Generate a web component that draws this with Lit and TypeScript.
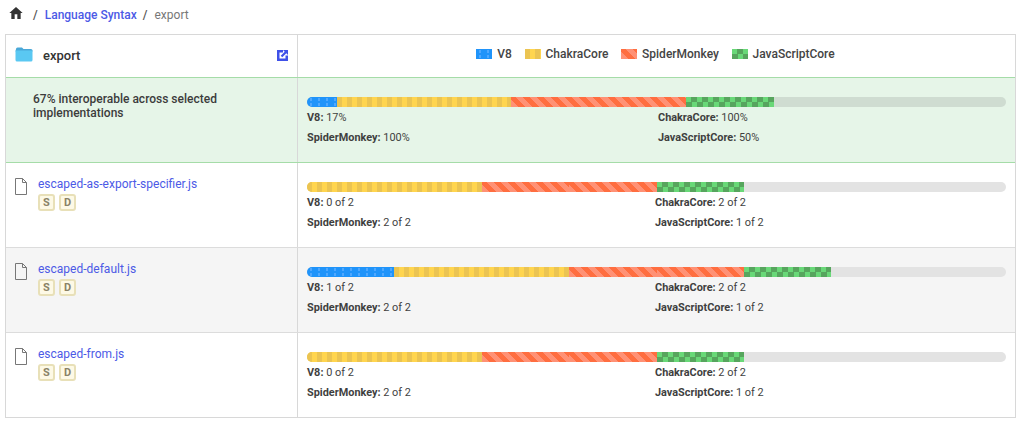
import { LitElement, html, css, svg } from 'lit';
import { customElement } from 'lit/decorators.js';

type Impl = 'v8' | 'chakra' | 'spider' | 'jsc';

interface TestRow {
  name: string;
  segments: [Impl, number][];
  stats: [string, string, string, string];
}

const UNIT = 87.375;

const tests: TestRow[] = [
  {
    name: 'escaped-as-export-specifier.js',
    segments: [['chakra', 2], ['spider', 1], ['spider', 1], ['jsc', 1]],
    stats: ['0 of 2', '2 of 2', '2 of 2', '1 of 2'],
  },
  {
    name: 'escaped-default.js',
    segments: [['v8', 1], ['chakra', 2], ['spider', 1], ['spider', 1], ['jsc', 1]],
    stats: ['1 of 2', '2 of 2', '2 of 2', '1 of 2'],
  },
  {
    name: 'escaped-from.js',
    segments: [['chakra', 2], ['spider', 1], ['spider', 1], ['jsc', 1]],
    stats: ['0 of 2', '2 of 2', '2 of 2', '1 of 2'],
  },
];

const fileIcon = svg`<svg class="file" width="12" height="17" viewBox="0 0 12 17"><path d="M.5.5h7l4 4v12H.5z M7.5.5v4h4" fill="none" stroke="#777" stroke-width="1"/></svg>`;

@customElement('app-root')
export class AppRoot extends LitElement {
  static styles = css`
    :host {
      display: block;
      font-family: Roboto, sans-serif;
      font-size: 12px;
      color: #444;
    }
    a {
      color: #4c5ae6;
      text-decoration: none;
    }
    .crumbs {
      display: flex;
      align-items: center;
      height: 30px;
      padding-left: 8px;
      font-weight: 500;
    }
    .crumbs .home {
      margin: -4px 9px 0 0;
    }
    .crumbs .sep {
      margin-right: 7px;
      color: #555;
    }
    .crumbs a {
      margin-right: 6px;
    }
    .crumbs .current {
      font-weight: 400;
      color: #777;
    }
    .table {
      margin: 4px 6px 0 5px;
      border: 1px solid #d8d8d8;
    }
    .row {
      display: grid;
      grid-template-columns: 292px 1fr;
      height: 84px;
      border-top: 1px solid #dcdcdc;
    }
    .row > div:first-child {
      border-right: 1px solid #d8d8d8;
    }
    .row.alt {
      background: #f5f5f5;
    }
    .row.head {
      height: 42px;
      border-top: 0;
    }
    .row.summary {
      background: #e6f5e8;
      border-top: 1px solid #a5dca8;
    }
    .row.summary + .row {
      border-top: 1px solid #a5dca8;
    }
    .title {
      display: flex;
      align-items: center;
      padding: 0 9px 1px 9px;
      font-size: 13px;
      font-weight: 500;
      color: #333;
    }
    .title .folder {
      margin: 0 10px 2px 0;
    }
    .title .name {
      flex: 1;
    }
    .legend {
      display: flex;
      justify-content: center;
      align-items: center;
      gap: 12.6px;
      padding: 0 2px 4px 0;
      font-weight: 500;
    }
    .legend span {
      display: flex;
      align-items: center;
      gap: 5px;
    }
    .swatch {
      width: 16px;
      height: 10px;
    }
    .rate {
      padding: 14px 27px;
      font-weight: 500;
      line-height: 14px;
      color: #3c3c3c;
    }
    .test {
      display: flex;
      gap: 11px;
      padding: 14px 9px;
    }
    .file {
      margin-top: 1px;
      flex: none;
    }
    .test a {
      display: block;
      line-height: 14px;
    }
    .flags {
      display: flex;
      gap: 4px;
      margin-top: 3px;
    }
    .flag {
      box-sizing: border-box;
      width: 17px;
      height: 17px;
      border: 2px solid #e8e0b8;
      border-radius: 3px;
      background: #fdf9e6;
      color: #8a8266;
      font-size: 11px;
      font-weight: 700;
      line-height: 13px;
      text-align: center;
    }
    .result {
      padding: 19px 9px 0 9px;
    }
    .track {
      display: flex;
      height: 10px;
      border-radius: 5px;
      overflow: hidden;
      background: #e3e3e3;
    }
    .summary .track {
      background: #cfdcd1;
    }
    .seg {
      flex: none;
      height: 100%;
    }
    .v8 {
      background-color: #2094fa;
      background-image: radial-gradient(circle at center, #4fa8ff 1.2px, transparent 1.4px);
      background-size: 8px 5px;
    }
    .chakra {
      background-color: #ffd54f;
      background-image: linear-gradient(90deg, #ebc452 50%, transparent 50%);
      background-size: 10px 10px;
    }
    .spider {
      background-color: #ff6e40;
      background-image: repeating-linear-gradient(45deg, #ff9175 0 5px, transparent 5px 10px);
    }
    .jsc {
      background-color: #69d878;
      background-image: conic-gradient(#57a55e 25%, transparent 25% 50%, #57a55e 50% 75%, transparent 75%);
      background-size: 11px 10px;
    }
    .stats {
      display: grid;
      grid-template-columns: 348px 1fr;
      margin-top: 1px;
      font-size: 10.9px;
      line-height: 20px;
      color: #3f3f3f;
    }
    .summary .stats {
      grid-template-columns: 351px 1fr;
    }
    .stats b {
      font-weight: 700;
    }
  `;

  private renderStats(v: string[]) {
    const names = ['V8', 'ChakraCore', 'SpiderMonkey', 'JavaScriptCore'];
    return html`<div class="stats">
      ${names.map((n, i) => html`<div><b>${n}:</b> ${v[i]}</div>`)}
    </div>`;
  }

  private renderBar(segments: [Impl, number][]) {
    return html`<div class="track">
      ${segments.map(
        ([impl, units]) => html`<div class="seg ${impl}" style="width:${units * UNIT}px"></div>`
      )}
    </div>`;
  }

  render() {
    return html`
      <nav class="crumbs">
        <svg class="home" width="16" height="16" viewBox="0 0 24 24"><path d="M10 21v-7h4v7h5v-9h3L12 3 2 12h3v9z" fill="#333"/></svg>
        <span class="sep">/</span>
        <a href="#">Language Syntax</a>
        <span class="sep">/</span>
        <span class="current">export</span>
      </nav>
      <div class="table">
        <div class="row head">
          <div class="title">
            <svg class="folder" width="18" height="15" viewBox="0 0 18 15"><path d="M1 2Q1 .5 2.500 .5H7l1.500 1.500H16q1.500 0 1.500 1.500v1H.5z" fill="#4aa8d8"/><path d="M.5 3.500h17v9.500q0 1.500-1.500 1.500H2Q.5 14.500.5 13z" fill="#5ac8f2"/></svg>
            <span class="name">export</span>
            <svg width="11" height="11" viewBox="0 0 11 11"><path d="M0 0h6v2.500H2.500v6h6V5.500H11V11H0z" fill="#3f51e8"/><path d="M6 0h5v5L9.300 3.300 5.300 7.300 3.700 5.700 7.700 1.700z" fill="#3f51e8"/></svg>
          </div>
          <div class="legend">
            <span><i class="swatch v8"></i>V8</span>
            <span><i class="swatch chakra"></i>ChakraCore</span>
            <span><i class="swatch spider"></i>SpiderMonkey</span>
            <span><i class="swatch jsc"></i>JavaScriptCore</span>
          </div>
        </div>
        <div class="row summary">
          <div class="rate">67% interoperable across selected<br />implementations</div>
          <div class="result">
            ${this.renderBar([['v8', 0.34], ['chakra', 2], ['spider', 2], ['jsc', 1]])}
            ${this.renderStats(['17%', '100%', '100%', '50%'])}
          </div>
        </div>
        ${tests.map(
          (t, i) => html`<div class="row ${i === 1 ? 'alt' : ''}">
            <div class="test">
              ${fileIcon}
              <div>
                <a href="#">${t.name}</a>
                <div class="flags"><span class="flag">S</span><span class="flag">D</span></div>
              </div>
            </div>
            <div class="result">
              ${this.renderBar(t.segments)}
              ${this.renderStats(t.stats)}
            </div>
          </div>`
        )}
      </div>
    `;
  }
}
